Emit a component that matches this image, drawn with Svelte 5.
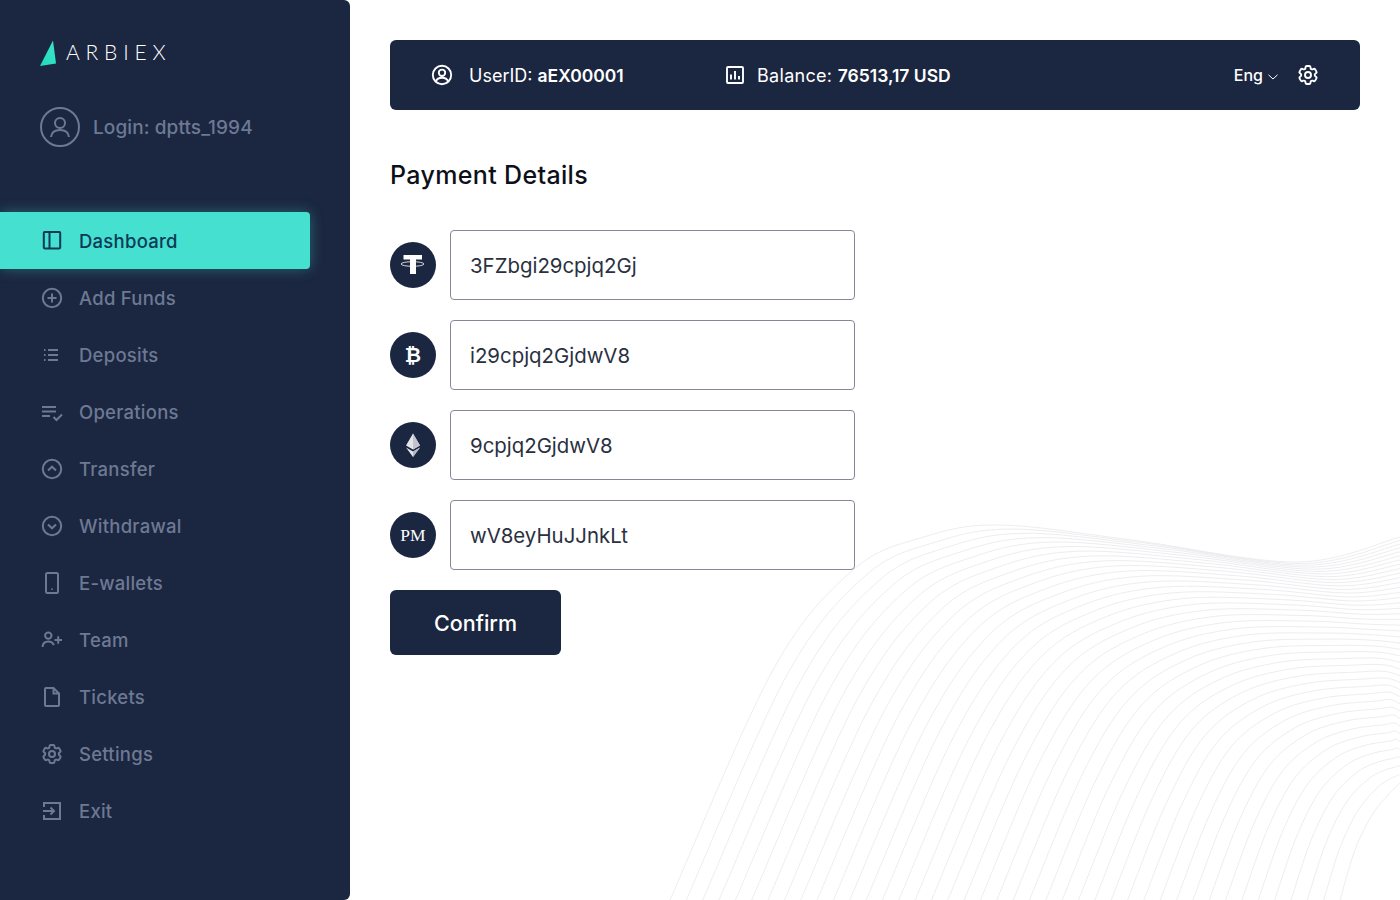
<script>
	const gear = `<path d="M9.594 3.94c.09-.542.56-.94 1.11-.94h2.593c.55 0 1.02.398 1.11.94l.213 1.281c.063.374.313.686.645.87.074.04.147.083.22.127.325.196.72.257 1.075.124l1.217-.456a1.125 1.125 0 0 1 1.37.49l1.296 2.247a1.125 1.125 0 0 1-.26 1.431l-1.003.827c-.293.241-.438.613-.43.992a7.723 7.723 0 0 1 0 .255c-.008.378.137.75.43.991l1.004.827c.424.35.534.955.26 1.43l-1.298 2.247a1.125 1.125 0 0 1-1.369.491l-1.217-.456c-.355-.133-.75-.072-1.076.124a6.47 6.47 0 0 1-.22.128c-.331.183-.581.495-.644.869l-.213 1.281c-.09.543-.56.94-1.11.94h-2.594c-.55 0-1.019-.398-1.11-.94l-.213-1.281c-.062-.374-.312-.686-.644-.87a6.52 6.52 0 0 1-.22-.127c-.325-.196-.72-.257-1.076-.124l-1.217.456a1.125 1.125 0 0 1-1.369-.49l-1.297-2.247a1.125 1.125 0 0 1 .26-1.431l1.004-.827c.292-.24.437-.613.43-.991a6.932 6.932 0 0 1 0-.255c.007-.38-.138-.751-.43-.992l-1.004-.827a1.125 1.125 0 0 1-.26-1.43l1.297-2.247a1.125 1.125 0 0 1 1.37-.491l1.216.456c.356.133.751.072 1.076-.124.072-.044.146-.086.22-.128.332-.183.582-.495.644-.869l.214-1.28Z"/><circle cx="12" cy="12" r="3"/>`;

	const navItems = [
		{ label: 'Dashboard', active: true, icon: `<rect x="3.800" y="3" width="16.400" height="16.400" rx="0.800"/><path d="M9.500 3v16.400"/>` },
		{ label: 'Add Funds', icon: `<circle cx="12" cy="12" r="9.200"/><path d="M12 7.500v9M7.500 12h9"/>` },
		{ label: 'Deposits', icon: `<path d="M8 7h10M8 12h10M8 17h10M4 7h1.500M4 12h1.500M4 17h1.500"/>` },
		{ label: 'Operations', icon: `<path d="M2 7h14M2 11.500h14M2 16h8M13.500 17l3 3 5.500-5.500"/>` },
		{ label: 'Transfer', icon: `<circle cx="12" cy="12" r="9.200"/><path d="M8 13.500l4-3.800 4 3.800"/>` },
		{ label: 'Withdrawal', icon: `<circle cx="12" cy="12" r="9.200"/><path d="M8 10.500l4 3.800 4-3.800"/>` },
		{ label: 'E-wallets', icon: `<rect x="6" y="2" width="12" height="20" rx="1.500"/><path d="M12 17.500v1.200"/>` },
		{ label: 'Team', icon: `<circle cx="8.300" cy="7.600" r="3.200"/><path d="M2.500 19c.3-3.700 2.800-5.500 5.800-5.500 2.400 0 4.600 1.200 5.600 3.700M14.500 12h7.500M18.200 8.200v7.600"/>` },
		{ label: 'Tickets', icon: `<path d="M13.500 3H6a1 1 0 0 0-1 1v16a1 1 0 0 0 1 1h12a1 1 0 0 0 1-1V8.500L13.500 3zM13.500 3v5.500H19"/>` },
		{ label: 'Settings', icon: gear },
		{ label: 'Exit', icon: `<path d="M4 8V4h16v16H4v-4M3 12h11M10.500 8.500l3.500 3.500-3.500 3.500"/>` }
	];

	const wallets = [
		{ kind: 'usdt', value: '3FZbgi29cpjq2Gj' },
		{ kind: 'btc', value: 'i29cpjq2GjdwV8' },
		{ kind: 'eth', value: '9cpjq2GjdwV8' },
		{ kind: 'pm', value: 'wV8eyHuJJnkLt' }
	];

	// wave family: anchors for the outer, middle and inner line, blended per line
	const outer = [[670, 900], [773, 670], [853, 570], [924, 537], [1000, 525], [1132, 540], [1297, 562], [1400, 537]];
	const middle = [[1005, 900], [1060, 770], [1110, 690], [1170, 650], [1240, 632], [1320, 630], [1370, 632], [1400, 634]];
	const inner = [[1340, 900], [1355, 850], [1372, 815], [1388, 795], [1395, 788], [1398, 785], [1399, 784], [1400, 783]];

	function blend(t, i, k) {
		const a = (1 - t) * (1 - 2 * t);
		const b = 4 * t * (1 - t);
		const c = t * (2 * t - 1);
		return a * outer[i][k] + b * middle[i][k] + c * inner[i][k];
	}

	function wavePath(t) {
		const pts = outer.map((_, i) => [blend(t, i, 0), blend(t, i, 1)]);
		let d = `M${pts[0][0].toFixed(1)} ${pts[0][1].toFixed(1)}`;
		for (let i = 0; i < pts.length - 1; i++) {
			const p0 = pts[Math.max(i - 1, 0)];
			const p1 = pts[i];
			const p2 = pts[i + 1];
			const p3 = pts[Math.min(i + 2, pts.length - 1)];
			const c1 = [p1[0] + (p2[0] - p0[0]) / 6, p1[1] + (p2[1] - p0[1]) / 6];
			const c2 = [p2[0] - (p3[0] - p1[0]) / 6, p2[1] - (p3[1] - p1[1]) / 6];
			d += `C${c1[0].toFixed(1)} ${c1[1].toFixed(1)} ${c2[0].toFixed(1)} ${c2[1].toFixed(1)} ${p2[0].toFixed(1)} ${p2[1].toFixed(1)}`;
		}
		return d;
	}

	const waves = Array.from({ length: 42 }, (_, i) => wavePath(i / 41));
</script>

<div class="page">
	<aside class="sidebar">
		<div class="logo">
			<svg width="18" height="26" viewBox="0 0 18 26">
				<defs>
					<linearGradient id="logoFill" x1="0" y1="1" x2="1" y2="0">
						<stop offset="0" stop-color="#1fdcb4" />
						<stop offset="1" stop-color="#3fe3cf" />
					</linearGradient>
				</defs>
				<path d="M13 0.500L0 26l16-2.500z" fill="url(#logoFill)" />
			</svg>
			<span class="logo-name">ARBIEX</span>
		</div>

		<div class="login">
			<svg class="avatar" width="40" height="40" viewBox="0 0 40 40">
				<circle cx="20" cy="20" r="19" />
				<circle cx="20" cy="16" r="5" />
				<path d="M11 30c.5-4.500 4-7 9-7s8.500 2.500 9 7" />
			</svg>
			<span>Login: dptts_1994</span>
		</div>

		<nav class="nav">
			{#each navItems as item}
				<a href="#top" class="nav-item" class:active={item.active}>
					<svg class="nav-icon" width="24" height="24" viewBox="0 0 24 24">{@html item.icon}</svg>
					<span>{item.label}</span>
				</a>
			{/each}
		</nav>
	</aside>

	<main class="main">
		<svg class="waves" width="1400" height="900" viewBox="0 0 1400 900">
			{#each waves as d}
				<path {d} />
			{/each}
		</svg>

		<header class="topbar">
			<div class="stat user-stat">
				<svg class="bar-icon" width="24" height="24" viewBox="0 0 24 24">
					<circle cx="12" cy="12" r="9.200" />
					<circle cx="12" cy="9.800" r="3.200" />
					<path d="M5.800 18.500c1-2.500 3.300-3.700 6.200-3.700s5.200 1.200 6.200 3.700" />
				</svg>
				<span>UserID: <b>aEX00001</b></span>
			</div>
			<div class="stat balance-stat">
				<svg class="bar-icon" width="20" height="20" viewBox="0 0 20 20">
					<rect x="2" y="2" width="16" height="16" rx="1" />
					<path d="M6 14.500V9.500M10 14.500V6M14 14.500V11" />
				</svg>
				<span>Balance: <b>76513,17 USD</b></span>
			</div>
			<div class="bar-right">
				<span class="lang">Eng
					<svg width="10" height="6" viewBox="0 0 10 6"><path d="M.5.800 5 5 9.500.800" /></svg>
				</span>
				<svg class="bar-icon" width="24" height="24" viewBox="0 0 24 24">{@html gear}</svg>
			</div>
		</header>

		<h1 class="title">Payment Details</h1>

		<form class="form">
			{#each wallets as wallet}
				<div class="row">
					<div class="coin">
						{#if wallet.kind === 'usdt'}
							<svg width="28" height="28" viewBox="0 0 28 28">
								<path d="M4.500 4h18.500v4.600h-6V23h-6V8.600H4.500z" fill="#fff" />
								<ellipse cx="13.500" cy="13" rx="11.500" ry="2.300" fill="none" stroke="#fff" stroke-width="0.800" />
							</svg>
						{:else if wallet.kind === 'btc'}
							<span class="btc">₿</span>
						{:else if wallet.kind === 'eth'}
							<svg width="28" height="30" viewBox="0 0 28 30">
								<path d="M14 3.500 7 15.500l7 4 7-4z" fill="#e4e4ea" />
								<path d="M14 3.500v16l7-4z" fill="#c2c3cd" />
								<path d="M7 17.500l7 9.500 7-9.500-7 4z" fill="#e4e4ea" />
								<path d="M14 21.500V27l7-9.500z" fill="#b5b6c2" />
							</svg>
						{:else}
							<span class="pm">PM</span>
						{/if}
					</div>
					<input class="field" type="text" value={wallet.value} />
				</div>
			{/each}
		</form>

		<button class="confirm" type="button">Confirm</button>
	</main>
</div>

<style>
	:global(body) {
		margin: 0;
		background: #fff;
	}

	.page {
		display: flex;
		height: 900px;
		overflow: hidden;
		font-family: Inter, 'Open Sans', sans-serif;
	}

	.sidebar {
		flex: 0 0 350px;
		box-sizing: border-box;
		background: #1b2640;
		border-radius: 0 6px 6px 0;
		padding-top: 40px;
		color: #6d7993;
	}

	.logo {
		display: flex;
		align-items: center;
		gap: 8px;
		height: 26px;
		padding-left: 40px;
	}

	.logo-name {
		font-family: Lato, sans-serif;
		font-size: 21px;
		font-weight: 300;
		line-height: 24px;
		letter-spacing: 5.800px;
		color: #fff;
		margin-bottom: 2px;
	}

	.login {
		display: flex;
		align-items: center;
		gap: 13px;
		margin-top: 41px;
		padding-left: 40px;
		font-size: 19px;
		font-weight: 500;
		letter-spacing: 0.100px;
	}

	.avatar {
		fill: none;
		stroke: #6d7993;
		stroke-width: 2;
	}

	.nav {
		margin-top: 65px;
	}

	.nav-item {
		display: flex;
		align-items: center;
		gap: 15px;
		width: 310px;
		height: 57px;
		box-sizing: border-box;
		padding-left: 40px;
		color: #6d7993;
		font-size: 18.500px;
		font-weight: 500;
		letter-spacing: 0.250px;
		text-decoration: none;
	}

	.nav-item.active {
		background: #46e0d0;
		color: #0c3a57;
		border-radius: 0 4px 4px 0;
		box-shadow: 0 0 14px rgba(70, 224, 208, 0.35);
	}

	.nav-icon {
		flex: none;
		fill: none;
		stroke: currentColor;
		stroke-width: 2;
	}

	.main {
		position: relative;
		flex: 1;
		padding: 40px;
	}

	.waves {
		position: absolute;
		top: 0;
		left: -350px;
		fill: none;
		stroke: #e9e9ec;
		stroke-width: 0.800;
	}

	.topbar {
		position: relative;
		display: flex;
		align-items: center;
		height: 70px;
		box-sizing: border-box;
		padding: 0 40px;
		background: #1b2640;
		border-radius: 6px;
		color: #fff;
		font-size: 18px;
	}

	.stat {
		display: flex;
		align-items: center;
		gap: 12px;
	}

	.user-stat {
		width: 295px;
		gap: 15px;
	}

	.balance-stat span {
		letter-spacing: 0.300px;
	}

	.stat b {
		font-size: 17.500px;
		font-weight: 600;
		letter-spacing: 0;
	}

	.bar-icon {
		flex: none;
		fill: none;
		stroke: #fff;
		stroke-width: 1.900;
	}

	.bar-right {
		display: flex;
		align-items: center;
		gap: 18px;
		margin-left: auto;
	}

	.lang {
		display: flex;
		align-items: center;
		gap: 5px;
		font-size: 16px;
		font-weight: 500;
	}

	.lang svg {
		fill: none;
		stroke: #fff;
		stroke-width: 1;
		margin-top: 3px;
	}

	.title {
		position: relative;
		margin: 48px 0 0;
		font-size: 25px;
		line-height: 34px;
		font-weight: 500;
		letter-spacing: 0.350px;
		color: #0d1018;
	}

	.form {
		position: relative;
		display: flex;
		flex-direction: column;
		gap: 20px;
		margin-top: 38px;
	}

	.row {
		display: flex;
		align-items: center;
		gap: 14px;
	}

	.coin {
		flex: none;
		display: flex;
		align-items: center;
		justify-content: center;
		width: 46px;
		height: 46px;
		border-radius: 50%;
		background: #1b2640;
		color: #fff;
	}

	.btc {
		font-family: 'DejaVu Sans', sans-serif;
		font-size: 20px;
		font-weight: 700;
		line-height: 1;
	}

	.pm {
		font-family: 'Liberation Serif', serif;
		font-size: 17.500px;
	}

	.field {
		width: 405px;
		height: 70px;
		box-sizing: border-box;
		padding: 0 19px;
		border: 1px solid #85889a;
		border-radius: 4px;
		background: #fff;
		color: #2a3040;
		font-family: inherit;
		font-size: 20.400px;
		outline: none;
	}

	.confirm {
		position: relative;
		display: block;
		width: 171px;
		height: 65px;
		margin-top: 20px;
		border: none;
		border-radius: 6px;
		background: #1b2640;
		color: #fff;
		font-family: inherit;
		font-size: 21.500px;
		font-weight: 500;
	}
</style>
